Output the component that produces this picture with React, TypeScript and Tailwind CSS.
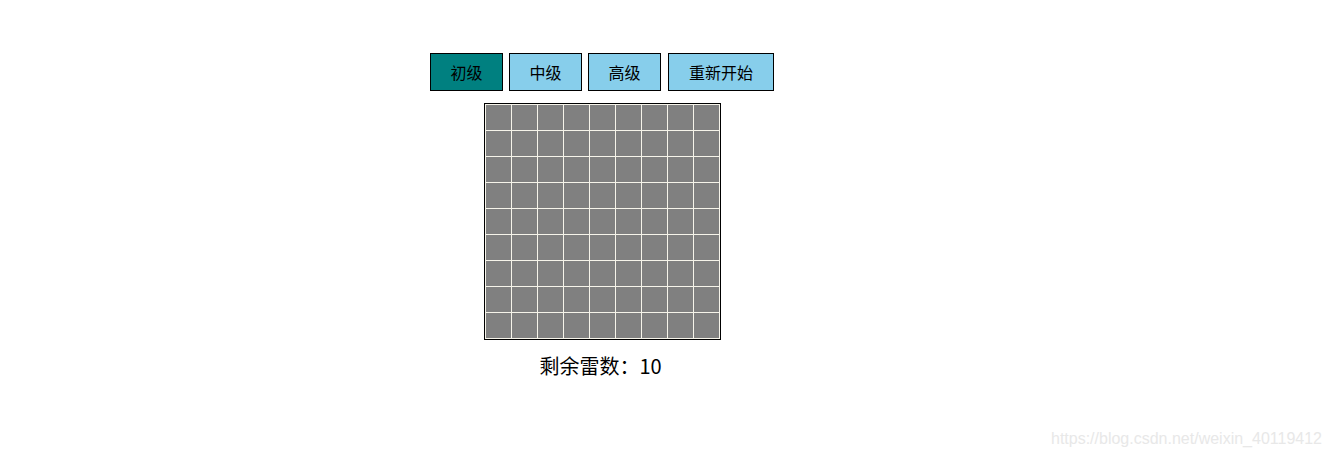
import { useState } from 'react';

type Level = 'easy' | 'medium' | 'hard';

const levels: { key: Level; label: string }[] = [
  { key: 'easy', label: '初级' },
  { key: 'medium', label: '中级' },
  { key: 'hard', label: '高级' },
];

export default function App() {
  const [level, setLevel] = useState<Level>('easy');
  const size = 9;
  const mines = 10;

  const btn = (active: boolean) =>
    `h-[38px] border border-black text-[16px] text-black ${active ? 'bg-[#008080]' : 'bg-[#87ceeb]'}`;

  return (
    <div
      className="relative h-[460px] w-full bg-white"
      style={{ fontFamily: '"Microsoft YaHei", "Noto Sans CJK SC", sans-serif' }}
    >
      <div className="flex w-[1204px] flex-col items-center pt-[53px]">
        {/* Controls */}
        <div className="flex gap-[6px]">
          {levels.map((l) => (
            <button key={l.key} className={`${btn(level === l.key)} w-[73px]`} onClick={() => setLevel(l.key)}>
              {l.label}
            </button>
          ))}
          <button className={`${btn(false)} ml-[1px] w-[106px]`}>重新开始</button>
        </div>

        {/* Board */}
        <div className="mt-[12px] ml-[1px] border border-black bg-[#f6f4ea] p-[1px]">
          <div className="grid grid-cols-[repeat(9,25px)] gap-[1px]">
            {Array.from({ length: size * size }).map((_, i) => (
              <div key={i} className="h-[25px] w-[25px] bg-[#808080]" />
            ))}
          </div>
        </div>

        <p className="mt-[12px] mr-[3px] text-[20px] leading-[28px] text-black">剩余雷数：{mines}</p>
      </div>

      {/* watermark */}
      <div
        className="absolute right-[9px] bottom-[9px] text-[16px] text-[#e8e8e8]"
        style={{ fontFamily: '"Liberation Sans", Arial, sans-serif' }}
      >
        https://blog.csdn.net/weixin_40119412
      </div>
    </div>
  );
}
